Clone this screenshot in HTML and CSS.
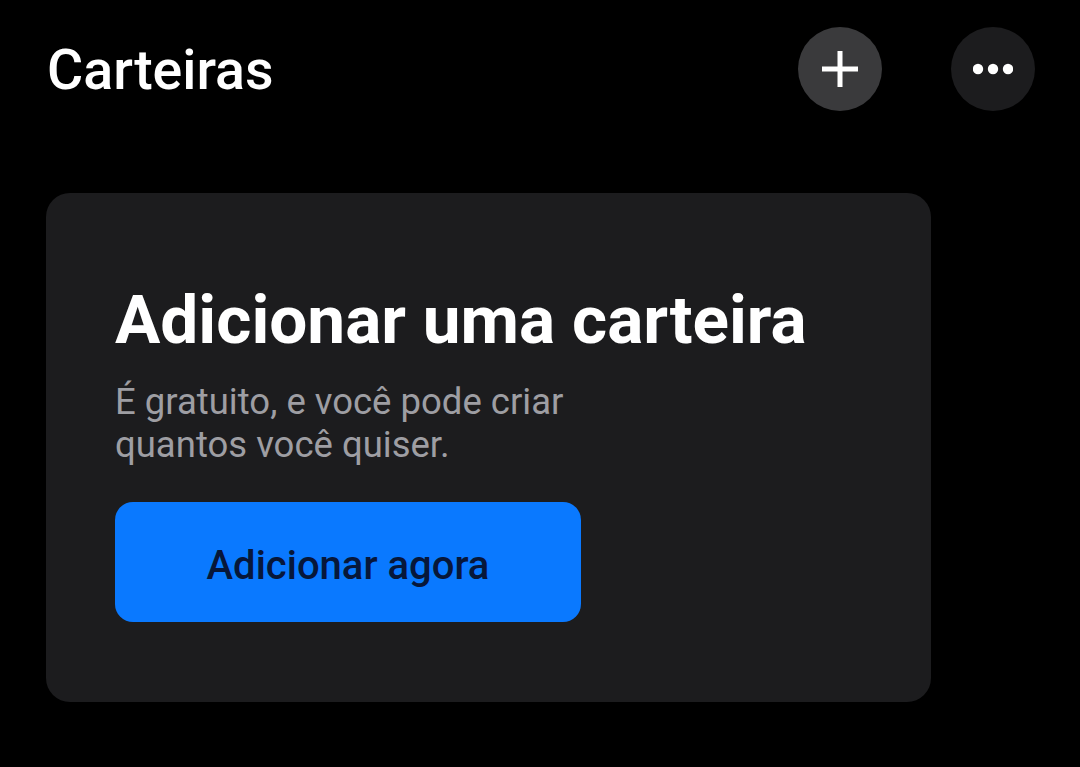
FILE: index.html
```html
<!DOCTYPE html>
<html lang="pt-BR">
<head>
  <meta charset="UTF-8" />
  <meta name="viewport" content="width=device-width, initial-scale=1.0"/>
  <title>Carteiras</title>
  <link rel="stylesheet" href="styles.css">
</head>
<body>

  <!-- cabeçalho -->
  <header class="top-bar">
    <h1>Carteiras</h1>
    <div class="actions">
      <button class="round-btn add" aria-label="Adicionar">
        <svg width="36" height="36" viewBox="0 0 36 36">
          <path d="M18 0 V36 M0 18 H36" stroke="#fff" stroke-width="5" fill="none"/>
        </svg>
      </button>
      <button class="round-btn more" aria-label="Mais">
        <svg width="40" height="12" viewBox="0 0 40 12">
          <circle cx="5" cy="6" r="5.2" fill="#fff"/>
          <circle cx="20" cy="6" r="5.2" fill="#fff"/>
          <circle cx="35" cy="6" r="5.2" fill="#fff"/>
        </svg>
      </button>
    </div>
  </header>

  <!-- cartão vazio -->
  <section class="empty-card">
    <h2>Adicionar uma carteira</h2>
    <p class="hint">É gratuito, e você pode criar quantos você quiser.</p>
    <button class="cta">Adicionar agora</button>
  </section>

</body>
</html>
```

FILE: styles.css
```css
:root {
  --bg: #000000;
  --card: #1c1c1e;
  --gray-btn: #3a3a3c;
  --muted: #9e9ea3;
  --blue: #0a79ff;
  --ink: #07173a;
}

body {
  margin: 0;
  padding: 27px 45px 0 46px;
  background: var(--bg);
  color: #fff;
  font-family: Roboto, "Noto Sans", sans-serif;
}

.top-bar {
  display: flex;
  align-items: center;
  justify-content: space-between;
  height: 84px;
}

.top-bar h1 {
  margin: 4px 0 0 1px;
  font-size: 55.5px;
  font-weight: 500;
  line-height: 1;
}

.actions {
  display: flex;
  gap: 69px;
}

.round-btn {
  width: 84px;
  height: 84px;
  border-radius: 50%;
  border: none;
  padding: 0;
  display: flex;
  align-items: center;
  justify-content: center;
  cursor: pointer;
}

.round-btn.add {
  background: var(--gray-btn);
}

.round-btn.more {
  background: var(--card);
}

.empty-card {
  width: 885px;
  box-sizing: border-box;
  margin-top: 82px;
  padding: 93px 69px 80px 69px;
  background: var(--card);
  border-radius: 24px;
}

.empty-card h2 {
  margin: 0;
  font-size: 67.5px;
  font-weight: 700;
  line-height: 68px;
}

.hint {
  margin: 26px 0 0;
  max-width: 490px;
  font-size: 36.5px;
  line-height: 43px;
  color: var(--muted);
}

.cta {
  display: block;
  margin-top: 36px;
  width: 466px;
  height: 120px;
  border: none;
  border-radius: 18px;
  background: var(--blue);
  color: var(--ink);
  font-family: inherit;
  font-size: 40px;
  font-weight: 500;
  padding: 6px 0 0;
  cursor: pointer;
}
```
